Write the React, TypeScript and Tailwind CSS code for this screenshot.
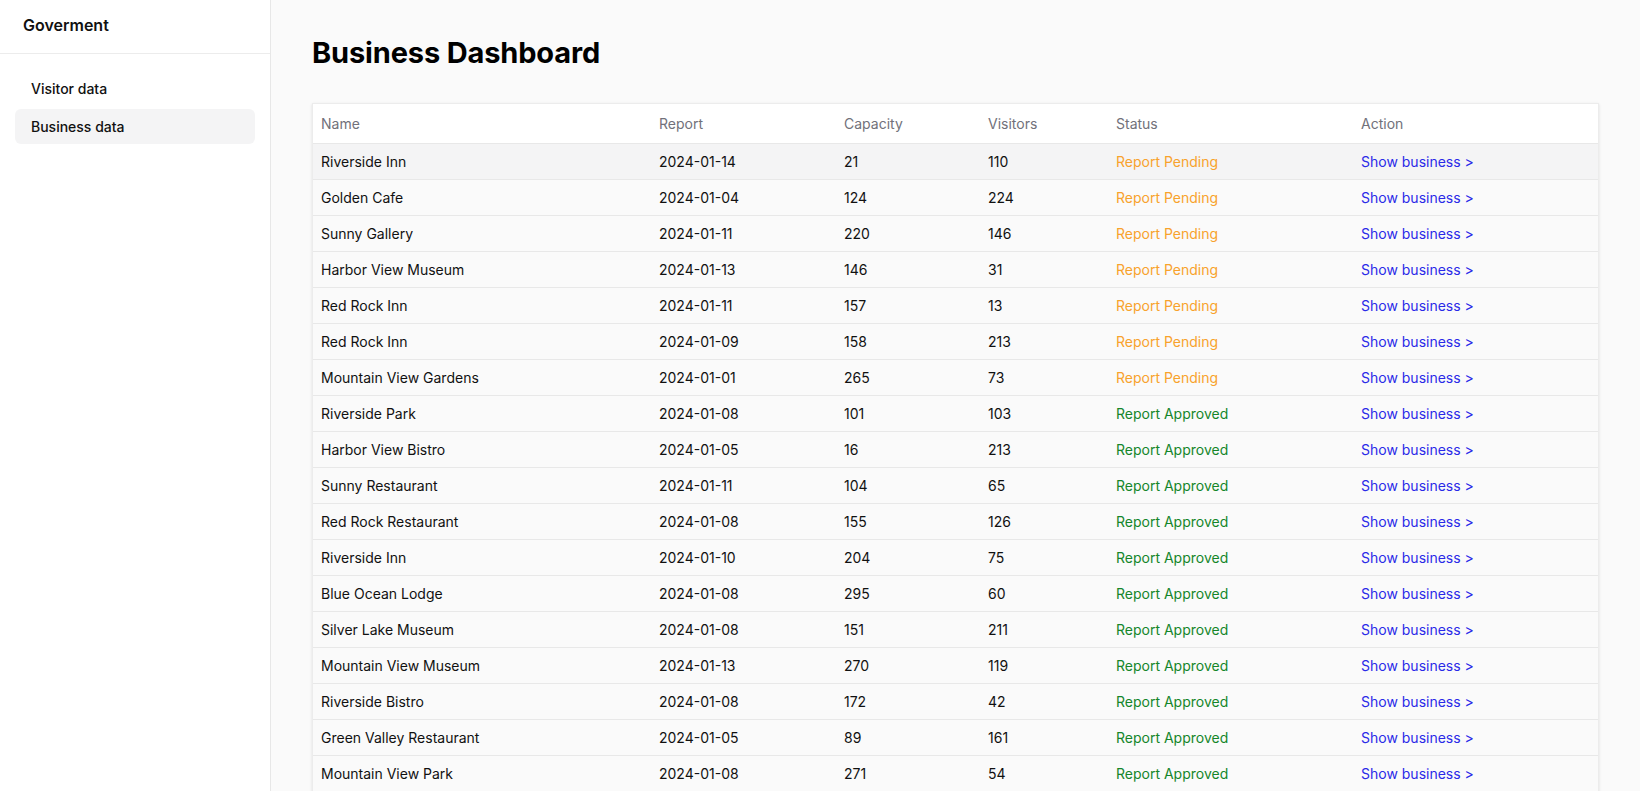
const rows: [string, string, number, number, boolean][] = [
  ['Riverside Inn', '2024-01-14', 21, 110, false],
  ['Golden Cafe', '2024-01-04', 124, 224, false],
  ['Sunny Gallery', '2024-01-11', 220, 146, false],
  ['Harbor View Museum', '2024-01-13', 146, 31, false],
  ['Red Rock Inn', '2024-01-11', 157, 13, false],
  ['Red Rock Inn', '2024-01-09', 158, 213, false],
  ['Mountain View Gardens', '2024-01-01', 265, 73, false],
  ['Riverside Park', '2024-01-08', 101, 103, true],
  ['Harbor View Bistro', '2024-01-05', 16, 213, true],
  ['Sunny Restaurant', '2024-01-11', 104, 65, true],
  ['Red Rock Restaurant', '2024-01-08', 155, 126, true],
  ['Riverside Inn', '2024-01-10', 204, 75, true],
  ['Blue Ocean Lodge', '2024-01-08', 295, 60, true],
  ['Silver Lake Museum', '2024-01-08', 151, 211, true],
  ['Mountain View Museum', '2024-01-13', 270, 119, true],
  ['Riverside Bistro', '2024-01-08', 172, 42, true],
  ['Green Valley Restaurant', '2024-01-05', 89, 161, true],
  ['Mountain View Park', '2024-01-08', 271, 54, true],
]

const Sidebar = () => {
  return (
    <aside className='w-[271px] shrink-0 h-full bg-white border-r border-[#e7e7e7] flex flex-col'>
      <div className='h-[54px] flex items-center px-[23px] border-b border-[#ececec] text-[16px] font-semibold text-[#111]'>
        <span className='-mt-[3px]'>Goverment</span>
      </div>
      <nav className='flex flex-col gap-[3px] px-[15px] pt-[17px] text-[14px] font-medium text-[#111]'>
        <a className='h-[35px] flex items-center px-[16px] rounded-md'>Visitor data</a>
        <a className='h-[35px] flex items-center px-[16px] rounded-md bg-[#f4f4f5]'>Business data</a>
      </nav>
    </aside>
  )
}

export default function App() {
  return (
    <div className='flex h-screen overflow-hidden bg-[#fafafa] font-["Inter","Liberation_Sans",sans-serif]'>
      <Sidebar />

      <main className='flex-1 overflow-hidden px-[41px] pt-[35px]'>
        <h1 className='text-[29px] leading-9 font-bold text-black tracking-[-0.005em]'>Business Dashboard</h1>

        <div className='mt-[32px] border border-[#ececec] shadow-sm bg-white'>
          <table className='w-full table-fixed border-collapse text-[14px]'>
            <colgroup>
              <col className='w-[338px]' />
              <col className='w-[185px]' />
              <col className='w-[144px]' />
              <col className='w-[128px]' />
              <col className='w-[245px]' />
              <col />
            </colgroup>
            <thead>
              <tr className='h-[39px] text-left text-[#71717a]'>
                <th className='font-normal px-2'>Name</th>
                <th className='font-normal px-2'>Report</th>
                <th className='font-normal px-2'>Capacity</th>
                <th className='font-normal px-2'>Visitors</th>
                <th className='font-normal px-2'>Status</th>
                <th className='font-normal px-2'>Action</th>
              </tr>
            </thead>
            <tbody className='text-[#111]'>
              {rows.map(([name, date, cap, vis, approved], index) => (
                <tr key={index} className={`h-[36px] border-t border-[#e8e8e8] ${index === 0 ? 'bg-[#f4f4f5]' : 'bg-[#fafafa]'}`}>
                  <td className='px-2'>{name}</td>
                  <td className='px-2'>{date}</td>
                  <td className='px-2'>{cap}</td>
                  <td className='px-2'>{vis}</td>
                  <td className={`px-2 ${approved ? 'text-[#15862a]' : 'text-[#f8a22c]'}`}>
                    {approved ? 'Report Approved' : 'Report Pending'}
                  </td>
                  <td className='px-2'>
                    <a className='text-[#2a2ae8] cursor-pointer'>Show business &gt;</a>
                  </td>
                </tr>
              ))}
            </tbody>
          </table>
        </div>
      </main>
    </div>
  )
}
